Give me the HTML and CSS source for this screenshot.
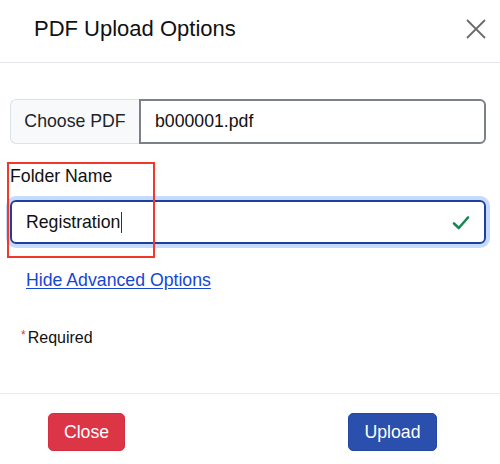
FILE: index.html
```html
<!DOCTYPE html>
<html>
<head>
<meta charset="utf-8">
<link rel="stylesheet" href="styles.css">
</head>
<body>
<div class="modal">
  <div class="modal-header">
    <h1 class="title">PDF Upload Options</h1>
    <span class="close-x" aria-label="Close">
      <svg width="20" height="20" viewBox="0 0 20 20"><path d="M1 1 L19 19 M19 1 L1 19" stroke="#6b6b6b" stroke-width="1.8" fill="none"/></svg>
    </span>
  </div>
  <div class="modal-body">
    <div class="file-group">
      <span class="file-btn">Choose PDF</span>
      <span class="file-name">b000001.pdf</span>
    </div>
    <div class="field">
      <div class="highlight"></div>
      <label class="label">Folder Name</label>
      <div class="control">
        <span class="value">Registration<span class="caret"></span></span>
        <svg class="check" width="18" height="16" viewBox="0 0 18 16"><path d="M2 8.5 L6.8 13 L16 2.5" stroke="#198754" stroke-width="2.6" fill="none" stroke-linecap="round" stroke-linejoin="round"/></svg>
      </div>
    </div>
    <a class="adv-link" href="#">Hide Advanced Options</a>
    <div class="required"><span class="star">*</span>Required</div>
  </div>
  <div class="modal-footer">
    <button class="btn btn-close">Close</button>
    <button class="btn btn-upload">Upload</button>
  </div>
</div>
</body>
</html>
```
FILE: styles.css
```css
* { box-sizing: border-box; }
html, body { margin: 0; padding: 0; background: #fff; }
body {
  font-family: "Liberation Sans", Arial, sans-serif;
  color: #212529;
  width: 500px;
  height: 464px;
  overflow: hidden;
}
.modal { display: flex; flex-direction: column; height: 464px; }
.modal-header {
  height: 63px;
  border-bottom: 1px solid #e3e6ea;
  display: flex;
  align-items: center;
  justify-content: space-between;
  padding: 0 14px 4px 34px;
}
.title { margin: 0; font-size: 22px; line-height: 26px; font-weight: 400; color: #111; }
.close-x { display: flex; width: 20px; height: 20px; }
.modal-body { padding: 36px 14px 0 10px; flex: 1; }
.file-group { display: flex; height: 45px; }
.file-btn {
  width: 129px;
  background: #f8f9fa;
  border: 1px solid #dee2e6;
  border-right: none;
  border-radius: 6px 0 0 6px;
  display: flex; align-items: center; justify-content: center;
  font-size: 17.7px; color: #212529;
}
.file-name {
  flex: 1;
  border: 2px solid #7b8089;
  border-radius: 0 6px 6px 0;
  display: flex; align-items: center;
  padding-left: 14px;
  font-size: 17.7px; color: #111;
}
.field { position: relative; margin-top: 20px; }
.highlight {
  position: absolute;
  left: -3px; top: -2px;
  width: 148px; height: 96px;
  border: 2px solid #f0392b;
  pointer-events: none;
  z-index: 2;
}
.label { display: block; font-size: 17.7px; line-height: 20px; padding-top: 2px; color: #111; }
.control {
  margin-top: 14px;
  height: 44px;
  border: 2px solid #1d3fa3;
  border-radius: 6px;
  box-shadow: 0 0 0 4px #c5dafc;
  display: flex; align-items: center; justify-content: space-between;
  padding: 0 14px 0 14px;
  font-size: 17.7px; color: #111;
}
.value { display: inline-flex; align-items: center; }
.caret { display: inline-block; width: 1px; height: 21px; background: #333; margin-left: 1px; }
.check { margin-top: 1px; }
.adv-link {
  display: inline-block;
  margin-top: 26px;
  margin-left: 16px;
  font-size: 17.7px;
  line-height: 20px;
  color: #1646d4;
  text-decoration: underline;
  text-underline-offset: 2px;
}
.required { margin-top: 35px; margin-left: 11px; font-size: 16px; line-height: 20px; color: #111; }
.star { color: #dc3545; font-size: 12px; vertical-align: 4px; margin-right: 2px; }
.modal-footer {
  border-top: 1px solid #e9ecef;
  height: 71px;
  display: flex; align-items: center; justify-content: space-between;
  padding: 6px 63px 0 48px;
}
.btn {
  height: 38px;
  border: 1px solid transparent;
  border-radius: 5px;
  font-family: "Liberation Sans", Arial, sans-serif;
  font-size: 17.7px;
  color: #fff;
  padding: 0;
}
.btn-close { width: 77px; background: #dc3545; border-color: #d42f40; }
.btn-upload { width: 89px; background: #2a4fac; border-color: #2448a3; }
```
